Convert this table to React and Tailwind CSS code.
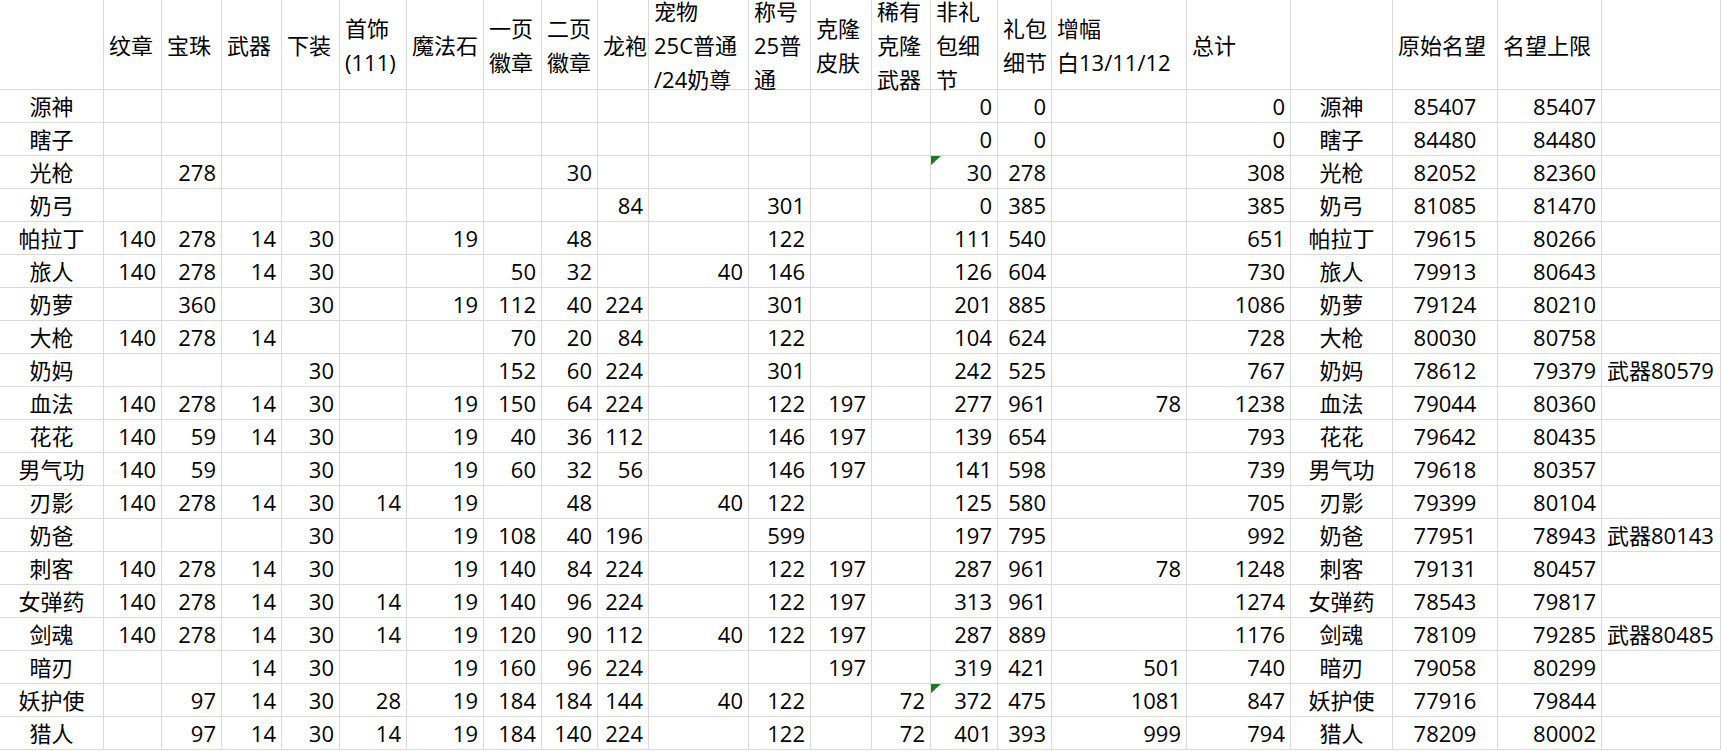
import React from "react";

const headers = [
  [],
  ["纹章"],
  ["宝珠"],
  ["武器"],
  ["下装"],
  ["首饰", "(111)"],
  ["魔法石"],
  ["一页", "徽章"],
  ["二页", "徽章"],
  ["龙袍"],
  ["宠物", "25C普通", "/24奶尊"],
  ["称号", "25普", "通"],
  ["克隆", "皮肤"],
  ["稀有", "克隆", "武器"],
  ["非礼", "包细", "节"],
  ["礼包", "细节"],
  ["增幅", "白13/11/12"],
  ["总计"],
  [],
  ["原始名望"],
  ["名望上限"],
  [],
];

const rows = [
  ["源神", "", "", "", "", "", "", "", "", "", "", "", "", "", "0", "0", "", "0", "源神", "85407", "85407", ""],
  ["瞎子", "", "", "", "", "", "", "", "", "", "", "", "", "", "0", "0", "", "0", "瞎子", "84480", "84480", ""],
  ["光枪", "", "278", "", "", "", "", "", "30", "", "", "", "", "", "30", "278", "", "308", "光枪", "82052", "82360", ""],
  ["奶弓", "", "", "", "", "", "", "", "", "84", "", "301", "", "", "0", "385", "", "385", "奶弓", "81085", "81470", ""],
  ["帕拉丁", "140", "278", "14", "30", "", "19", "", "48", "", "", "122", "", "", "111", "540", "", "651", "帕拉丁", "79615", "80266", ""],
  ["旅人", "140", "278", "14", "30", "", "", "50", "32", "", "40", "146", "", "", "126", "604", "", "730", "旅人", "79913", "80643", ""],
  ["奶萝", "", "360", "", "30", "", "19", "112", "40", "224", "", "301", "", "", "201", "885", "", "1086", "奶萝", "79124", "80210", ""],
  ["大枪", "140", "278", "14", "", "", "", "70", "20", "84", "", "122", "", "", "104", "624", "", "728", "大枪", "80030", "80758", ""],
  ["奶妈", "", "", "", "30", "", "", "152", "60", "224", "", "301", "", "", "242", "525", "", "767", "奶妈", "78612", "79379", "武器80579"],
  ["血法", "140", "278", "14", "30", "", "19", "150", "64", "224", "", "122", "197", "", "277", "961", "78", "1238", "血法", "79044", "80360", ""],
  ["花花", "140", "59", "14", "30", "", "19", "40", "36", "112", "", "146", "197", "", "139", "654", "", "793", "花花", "79642", "80435", ""],
  ["男气功", "140", "59", "", "30", "", "19", "60", "32", "56", "", "146", "197", "", "141", "598", "", "739", "男气功", "79618", "80357", ""],
  ["刃影", "140", "278", "14", "30", "14", "19", "", "48", "", "40", "122", "", "", "125", "580", "", "705", "刃影", "79399", "80104", ""],
  ["奶爸", "", "", "", "30", "", "19", "108", "40", "196", "", "599", "", "", "197", "795", "", "992", "奶爸", "77951", "78943", "武器80143"],
  ["刺客", "140", "278", "14", "30", "", "19", "140", "84", "224", "", "122", "197", "", "287", "961", "78", "1248", "刺客", "79131", "80457", ""],
  ["女弹药", "140", "278", "14", "30", "14", "19", "140", "96", "224", "", "122", "197", "", "313", "961", "", "1274", "女弹药", "78543", "79817", ""],
  ["剑魂", "140", "278", "14", "30", "14", "19", "120", "90", "112", "40", "122", "197", "", "287", "889", "", "1176", "剑魂", "78109", "79285", "武器80485"],
  ["暗刃", "", "", "14", "30", "", "19", "160", "96", "224", "", "", "197", "", "319", "421", "501", "740", "暗刃", "79058", "80299", ""],
  ["妖护使", "", "97", "14", "30", "28", "19", "184", "184", "144", "40", "122", "", "72", "372", "475", "1081", "847", "妖护使", "77916", "79844", ""],
  ["猎人", "", "97", "14", "30", "14", "19", "184", "140", "224", "", "122", "", "72", "401", "393", "999", "794", "猎人", "78209", "80002", ""],
];

const flagged = new Set(["2-14", "18-14"]);

function alignClass(ci) {
  if (ci === 0 || ci === 18 || ci === 19) return "justify-center";
  if (ci === 21) return "justify-start pl-[5px]";
  return "justify-end pr-[5px]";
}

function Triangle() {
  return (
    <svg className="absolute left-0 top-0" width="10" height="9" viewBox="0 0 10 9">
      <polygon points="0,0 10,0 0,9" fill="#1a7c1a" />
    </svg>
  );
}

export default function App() {
  return (
    <div className="w-[1721px] h-[751px] overflow-hidden bg-white text-black text-[22px] font-['Open_Sans','Noto_Sans_CJK_SC',sans-serif]">
      <div className="grid grid-cols-[104px_58px_60px_60px_58px_67px_77px_58px_56px_51px_100px_62px_61px_59px_67px_54px_135px_104px_102px_105px_104px_1fr]">
        {headers.map((lines, ci) => (
          <div
            key={`h-${ci}`}
            className="h-[90px] border-r border-b border-[#dadada] flex flex-col justify-center pl-[5px] leading-[34px] whitespace-nowrap overflow-visible"
          >
            {lines.map((l, li) => (
              <span key={li}>{l}</span>
            ))}
          </div>
        ))}
        {rows.map((row, ri) =>
          row.map((v, ci) => (
            <div
              key={`${ri}-${ci}`}
              className={`relative h-[33px] border-r border-b border-[#dadada] flex items-center leading-[33px] whitespace-nowrap ${alignClass(ci)}`}
            >
              {flagged.has(`${ri}-${ci}`) && <Triangle />}
              {v}
            </div>
          ))
        )}
      </div>
    </div>
  );
}
